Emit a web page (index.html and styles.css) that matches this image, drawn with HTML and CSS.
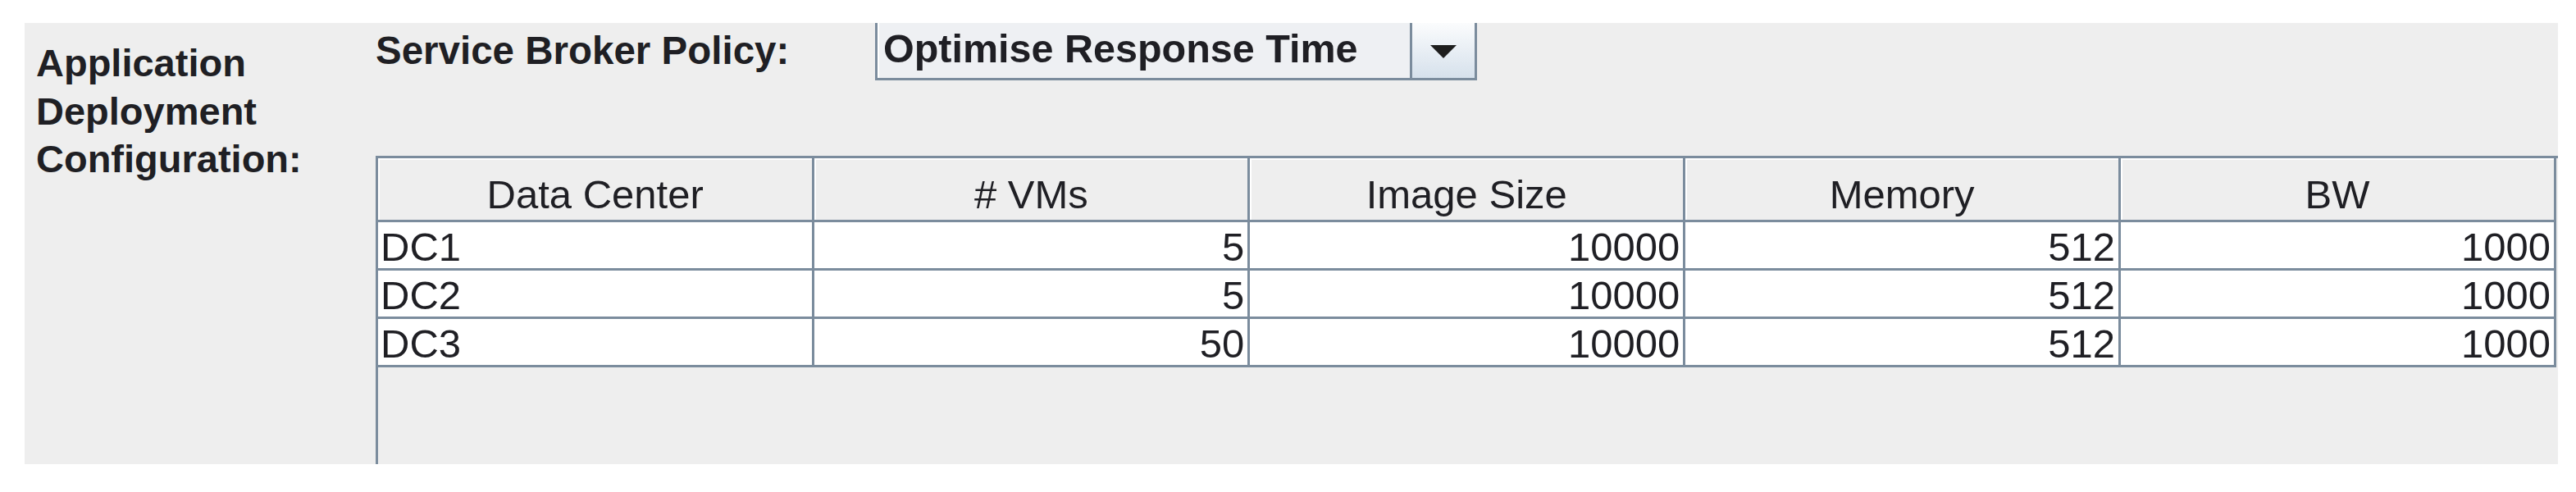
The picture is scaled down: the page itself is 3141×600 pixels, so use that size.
FILE: index.html
```html
<!DOCTYPE html>
<html>
<head>
<meta charset="utf-8">
<title>Application Deployment Configuration</title>
<link rel="stylesheet" href="styles.css">
</head>
<body>
<div class="panel">
  <div class="side-label">Application<br>Deployment<br>Configuration:</div>
  <div class="main">
    <div class="policy-row">
      <div class="policy-label">Service Broker Policy:</div>
      <div class="combo">
        <div class="combo-text">Optimise Response Time</div>
        <div class="combo-btn">
          <svg class="arrow" width="32" height="16" viewBox="0 0 32 16"><polygon points="0,0 32,0 16,16" fill="#1e1e1e"/></svg>
        </div>
      </div>
    </div>
    <div class="scroll">
      <table class="grid">
        <thead>
          <tr><th>Data Center</th><th># VMs</th><th>Image Size</th><th>Memory</th><th>BW</th></tr>
        </thead>
        <tbody>
          <tr><td class="txt">DC1</td><td>5</td><td>10000</td><td>512</td><td>1000</td></tr>
          <tr><td class="txt">DC2</td><td>5</td><td>10000</td><td>512</td><td>1000</td></tr>
          <tr><td class="txt">DC3</td><td>50</td><td>10000</td><td>512</td><td>1000</td></tr>
        </tbody>
      </table>
    </div>
  </div>
</div>
</body>
</html>
```
FILE: styles.css
```css
html, body {
  margin: 0;
  padding: 0;
  background: #ffffff;
}

body {
  font-family: "Liberation Sans", Arial, sans-serif;
  color: #1f1f24;
}

.panel {
  margin: 28px 0 0 30px;
  width: 3089px;
  height: 538px;
  background: #eeeeee;
  overflow: hidden;
  display: flex;
}

.side-label {
  flex: none;
  width: 414px;
  padding: 20px 0 0 14px;
  font-weight: bold;
  font-size: 47px;
  line-height: 58.5px;
}

.main {
  flex: 1;
  min-width: 0;
  display: flex;
  flex-direction: column;
}

.policy-row {
  flex: none;
  display: flex;
  align-items: flex-start;
  height: 70px;
}

.policy-label {
  flex: none;
  width: 609px;
  font-weight: bold;
  font-size: 47.5px;
  line-height: 67px;
  white-space: nowrap;
}

.combo {
  flex: none;
  display: flex;
  width: 734px;
  height: 70px;
  box-sizing: border-box;
  border: 3px solid #7b8c9d;
  border-top: none;
  background: #eef0f3;
}

.combo-text {
  flex: 1;
  padding-left: 7px;
  font-weight: bold;
  font-size: 48.5px;
  line-height: 62px;
  white-space: nowrap;
  box-shadow: inset 2px 0 0 #ffffff;
}

.combo-btn {
  flex: none;
  width: 76px;
  border-left: 3px solid #7b8c9d;
  background: linear-gradient(#fbfcfd, #d6e1ec);
  display: flex;
  justify-content: center;
  align-items: flex-start;
  padding-top: 27px;
  box-sizing: content-box;
}

.arrow {
  display: block;
}

.scroll {
  flex: 1;
  min-height: 0;
  margin-top: 92px;
  border-left: 3px solid #7b8c9d;
  border-top: 3px solid #7b8c9d;
  background: #eeeeee;
}

.grid {
  table-layout: fixed;
  width: 2656px;
  border-collapse: collapse;
  border-spacing: 0;
  font-size: 49px;
}

.grid th {
  height: 55px;
  padding: 16px 0 3px 0;
  line-height: 56px;
  font-weight: normal;
  text-align: center;
  background: #eeeeee;
  border-right: 3px solid #7b8c9d;
  border-bottom: 3px solid #7b8c9d;
  box-shadow: inset 2px 2px 0 #ffffff;
  white-space: nowrap;
}

.grid td {
  height: 52px;
  padding: 4px 4px 0 4px;
  line-height: 52px;
  text-align: right;
  background: #ffffff;
  border-right: 3px solid #7b8c9d;
  border-bottom: 3px solid #7b8c9d;
  white-space: nowrap;
}

.grid td.txt {
  text-align: left;
  padding-left: 3px;
}
```
